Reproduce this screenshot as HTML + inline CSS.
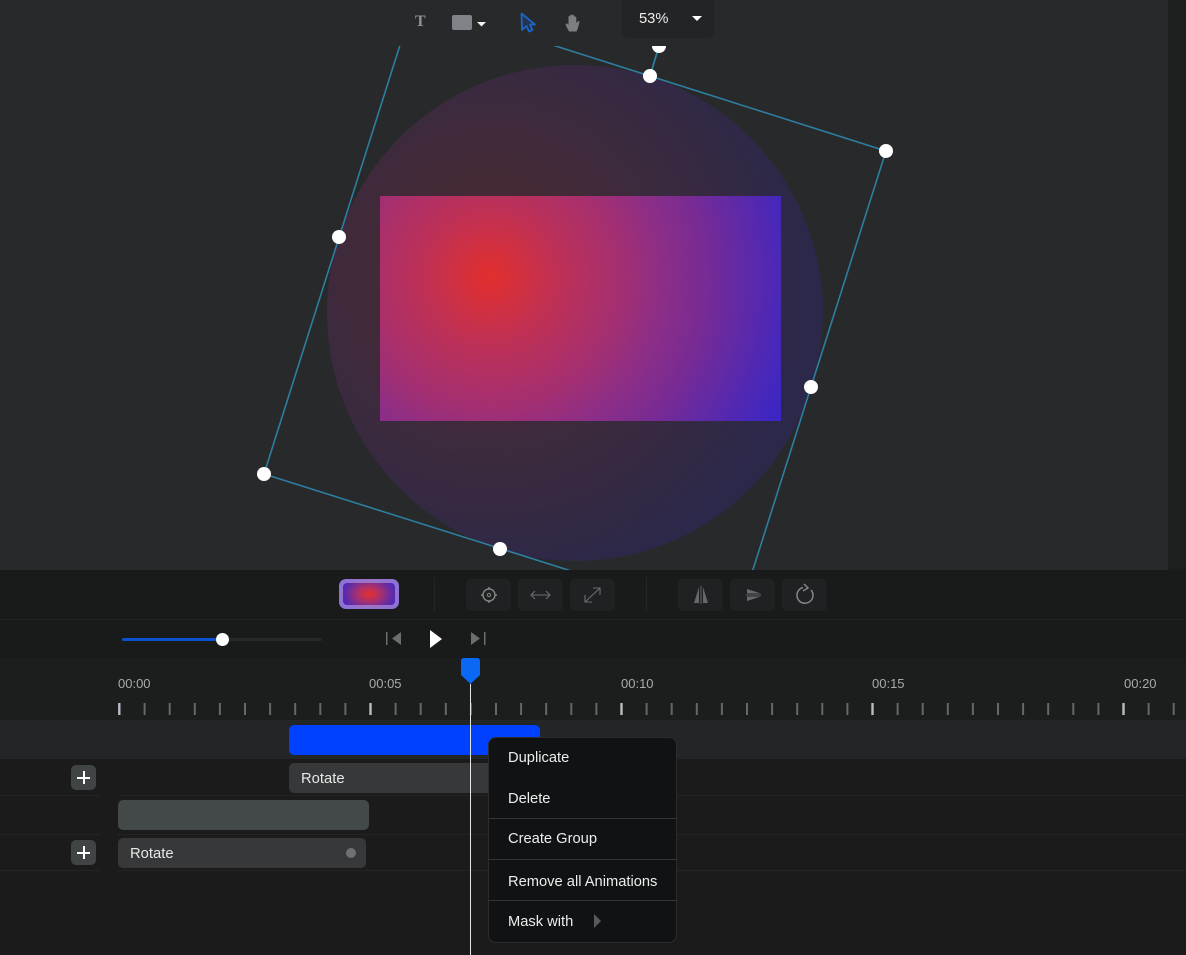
<!DOCTYPE html>
<html>
<head>
<meta charset="utf-8">
<style>
html,body{margin:0;padding:0;background:#191b1b;}
body{width:1186px;height:955px;position:relative;overflow:hidden;font-family:"Liberation Sans",sans-serif;}
.a{position:absolute;}
.btn{position:absolute;top:579px;width:45px;height:32px;background:#1f2122;border-radius:5px;}
.lab{position:absolute;top:676px;font-size:13px;line-height:15px;color:#a9abab;}
.mi{position:absolute;left:19px;font-size:14.7px;line-height:18px;color:#eceded;white-space:nowrap;}
.sep{position:absolute;left:0;width:100%;height:1px;background:#333536;}
.plus{position:absolute;left:71px;width:25px;height:25px;background:#404445;border-radius:5px;}
.plus:before{content:"";position:absolute;left:6px;top:11.5px;width:13px;height:2px;background:#fff;}
.plus:after{content:"";position:absolute;left:11.5px;top:6px;width:2px;height:13px;background:#fff;}
.rot{position:absolute;height:30px;background:#363839;border-radius:5px;color:#e6e7e7;font-size:14.8px;line-height:33px;text-indent:12px;}
</style>
</head>
<body>
<!-- canvas -->
<div class="a" style="left:0;top:0;width:1168px;height:570px;background:#28292b;"></div>
<div class="a" style="left:1168px;top:0;width:18px;height:570px;background:#1d1f1f;"></div>
<svg class="a" style="left:0;top:0" width="1168" height="570" viewBox="0 0 1168 570">
<defs>
<radialGradient id="g" gradientUnits="userSpaceOnUse" cx="490" cy="277" r="330">
<stop offset="0" stop-color="#e22f2d"/>
<stop offset=".22" stop-color="#bc3058"/>
<stop offset=".40" stop-color="#a32f72"/>
<stop offset=".53" stop-color="#8b2e88"/>
<stop offset=".64" stop-color="#7a2b92"/>
<stop offset=".88" stop-color="#4a28b8"/>
<stop offset="1" stop-color="#3624c8"/>
</radialGradient>
<clipPath id="c"><rect x="0" y="46" width="1168" height="524"/></clipPath>
</defs>
<circle cx="575" cy="313" r="248" fill="url(#g)" opacity=".2"/>
<rect x="380" y="196" width="401" height="225" fill="url(#g)"/>
<g clip-path="url(#c)">
<path d="M414 1L886 151L736 623L264 474Z" fill="none" stroke="#2d7f9f" stroke-width="1.600"/>
<path d="M650 76L659 46" stroke="#2d7f9f" stroke-width="1.800"/>
<circle cx="659" cy="46" r="7" fill="#fff"/>
</g>
<g fill="#fff">
<circle cx="650" cy="76" r="7"/>
<circle cx="886" cy="151" r="7"/>
<circle cx="339" cy="237" r="7"/>
<circle cx="811" cy="387" r="7"/>
<circle cx="264" cy="474" r="7"/>
<circle cx="500" cy="549" r="7"/>
</g>
</svg>

<!-- top toolbar -->
<div class="a" style="left:415px;top:13px;font-family:'Liberation Serif',serif;font-weight:bold;font-size:16px;line-height:18px;color:#8f9090;">T</div>
<div class="a" style="left:452px;top:15px;width:20px;height:15px;background:#7f8286;border-radius:2px;"></div>
<svg class="a" style="left:470px;top:10px" width="110" height="26" viewBox="470 10 110 26">
<path d="M477 22H486L481.500 26.500Z" fill="#f2f2f2"/>
<path d="M521.500 13.500L535 24.500H530L532.500 30L529 31.500L526.500 26L522 30Z" fill="#24344a" stroke="#1c62c8" stroke-width="1.800" stroke-linejoin="round"/>
<path d="M569 31.500C567.500 28.500 566 26 565.500 24C566.500 23 567.800 23.500 568.500 25V17C568.500 15.500 570.300 15.500 570.400 17V15.500C570.400 14 572.200 14 572.300 15.500V16C572.400 14.500 574.200 14.500 574.300 16V17.500C574.400 16.200 576.200 16.200 576.300 17.500V23C577.500 22 578 21 578.500 21L579.500 21.500C579 24.500 578 28.500 576.500 31.500Z" fill="#7d7e7f"/>
</svg>
<div class="a" style="left:622px;top:0;width:92px;height:38px;background:#232425;border-radius:0 0 5px 5px;"></div>
<div class="a" style="left:639px;top:11px;font-size:14.7px;line-height:17px;color:#ececec;">53%</div>
<svg class="a" style="left:690px;top:14px" width="14" height="9"><path d="M2 2H12L7 7Z" fill="#fff"/></svg>

<!-- control strip -->
<div class="a" style="left:0;top:570px;width:1186px;height:49px;background:#191b1b;"></div>
<div class="a" style="left:0;top:619px;width:1186px;height:1px;background:#212323;"></div>
<div class="a" style="left:0;top:620px;width:1186px;height:38px;background:#191a1a;"></div>
<div class="a" style="left:0;top:658px;width:1186px;height:62px;background:#1c1d1d;"></div>
<div class="a" style="left:0;top:720px;width:1186px;height:1px;background:#262828;"></div>
<div class="a" style="left:0;top:721px;width:1186px;height:38px;background:#222627;"></div>
<div class="a" style="left:0;top:759px;width:1186px;height:196px;background:#1b1b1b;"></div>
<div class="a" style="left:0;top:795px;width:1186px;height:1px;background:#232424;"></div>
<div class="a" style="left:0;top:834px;width:1186px;height:1px;background:#232424;"></div>
<div class="a" style="left:0;top:870px;width:1186px;height:1px;background:#232424;"></div>
<div class="a" style="left:100px;top:759px;width:18px;height:112px;background:#1b1b1b;"></div>

<!-- thumbnail -->
<div class="a" style="left:339px;top:579px;width:60px;height:30px;border-radius:7px;background:radial-gradient(ellipse 32px 20px at 50% 50%,#c06f98 0%,#9f74c4 55%,#8d72d6 100%);"></div>
<div class="a" style="left:343px;top:583px;width:52px;height:22px;border-radius:4px;background:radial-gradient(ellipse 30px 20px at 50% 50%,#e5302d 0%,#a8306f 40%,#5f2ba8 78%,#4a28b8 100%);"></div>
<div class="a" style="left:434px;top:577px;width:1px;height:34px;background:#252727;"></div>
<div class="a" style="left:646px;top:577px;width:1px;height:34px;background:#252727;"></div>

<div class="btn" style="left:466px"></div>
<div class="btn" style="left:518px"></div>
<div class="btn" style="left:570px"></div>
<div class="btn" style="left:678px"></div>
<div class="btn" style="left:730px"></div>
<div class="btn" style="left:782px"></div>

<svg class="a" style="left:460px;top:575px" width="380" height="40" viewBox="460 575 380 40">
<g fill="none">
<g stroke="#858787" stroke-width="1.400">
<circle cx="489" cy="595" r="6"/>
<path d="M489 587V589.500M489 600.500V603M481 595H483.500M494.500 595H497"/>
</g>
<circle cx="489" cy="595" r="1.600" stroke="#858787" stroke-width="1"/>
<g stroke="#6b6d6d" stroke-width="1.100">
<path d="M531 595H550M535 591L531 595L535 599M546 591L550 595L546 599"/>
<path d="M585.500 601.500L599.500 588.500M593 588H600V595M585 595V602H592"/>
</g>
<path d="M811 590A8 8 0 1 1 803 587.500M804 584L808 588L803 591" stroke="#858787" stroke-width="1.500"/>
</g>
<g fill="#666969">
<rect x="700.500" y="586" width="1" height="18"/>
<path d="M699 587V603H694Z"/>
<path d="M703 587V603H708Z"/>
<path d="M747 589L761 593.500H747Z"/>
<rect x="746" y="594.500" width="15" height="1"/>
<path d="M747 596.500H761L747 601Z"/>
</g>
</svg>

<!-- slider -->
<div class="a" style="left:122px;top:638px;width:200px;height:3px;background:#272829;border-radius:2px;"></div>
<div class="a" style="left:122px;top:638px;width:100px;height:3px;background:#0b50cf;border-radius:2px;"></div>
<div class="a" style="left:215.500px;top:632.500px;width:13px;height:13px;background:#fff;border-radius:50%;"></div>

<svg class="a" style="left:380px;top:625px" width="110" height="28" viewBox="380 625 110 28">
<rect x="386" y="632" width="1.500" height="13" fill="#6b6e6e"/>
<path d="M401 632V645L392 638.500Z" fill="#6b6e6e"/>
<path d="M430 630L442 639L430 648Z" fill="#fff"/>
<path d="M471 632V645L480 638.500Z" fill="#6b6e6e"/>
<rect x="484" y="632" width="1.500" height="13" fill="#6b6e6e"/>
</svg>

<!-- ruler -->
<div class="lab" style="left:118px">00:00</div>
<div class="lab" style="left:369px">00:05</div>
<div class="lab" style="left:621px">00:10</div>
<div class="lab" style="left:872px">00:15</div>
<div class="lab" style="left:1124px">00:20</div>
<svg class="a" style="left:0;top:700px" width="1186" height="18" viewBox="0 700 1186 18">
<path stroke="#656769" stroke-width="2" d="M144.600 703V715M169.700 703V715M194.800 703V715M219.900 703V715M245 703V715M270.100 703V715M295.200 703V715M320.300 703V715M345.400 703V715M395.600 703V715M420.700 703V715M445.800 703V715M470.900 703V715M496 703V715M521.100 703V715M546.200 703V715M571.300 703V715M596.400 703V715M646.600 703V715M671.700 703V715M696.800 703V715M721.900 703V715M747 703V715M772.100 703V715M797.200 703V715M822.300 703V715M847.400 703V715M897.600 703V715M922.700 703V715M947.800 703V715M972.900 703V715M998 703V715M1023.100 703V715M1048.200 703V715M1073.300 703V715M1098.400 703V715M1148.600 703V715M1173.700 703V715"/>
<path stroke="#b9bcc2" stroke-width="2.400" d="M119.300 703V715M370.500 703V715M621.500 703V715M872.500 703V715M1123.500 703V715"/>
</svg>

<!-- tracks -->
<div class="a" style="left:289px;top:725px;width:251px;height:30px;background:#0040ff;border-radius:5px;"></div>
<div class="rot" style="left:289px;top:763px;width:210px;">Rotate</div>
<div class="a" style="left:118px;top:800px;width:251px;height:30px;background:#434848;border-radius:5px;"></div>
<div class="rot" style="left:118px;top:838px;width:248px;">Rotate</div>
<div class="a" style="left:346px;top:848px;width:10px;height:10px;border-radius:50%;background:#6f7072;"></div>
<div class="plus" style="top:765px"></div>
<div class="plus" style="top:840px"></div>

<!-- playhead -->
<div class="a" style="left:470px;top:684px;width:1px;height:271px;background:#e4e6e6;"></div>
<svg class="a" style="left:458px;top:656px" width="24" height="30" viewBox="458 656 24 30">
<path d="M464 658H477C479 658 480 659.500 480 661V675L470.500 684L461 675V661C461 659.500 462 658 464 658Z" fill="#0a68f5"/>
</svg>

<!-- context menu -->
<div class="a" style="left:488px;top:737px;width:187px;height:204px;background:#111213;border:1px solid #2b2c2d;border-radius:8px;">
  <div class="mi" style="top:11px">Duplicate</div>
  <div class="mi" style="top:52px">Delete</div>
  <div class="sep" style="top:80px"></div>
  <div class="mi" style="top:92px">Create Group</div>
  <div class="sep" style="top:121px"></div>
  <div class="mi" style="top:135px">Remove all Animations</div>
  <div class="sep" style="top:162px"></div>
  <div class="mi" style="top:175px">Mask with</div>
  <svg class="a" style="left:104px;top:175px" width="9" height="16"><path d="M1 1L8 8L1 15Z" fill="#565a5a"/></svg>
</div>
</body>
</html>
